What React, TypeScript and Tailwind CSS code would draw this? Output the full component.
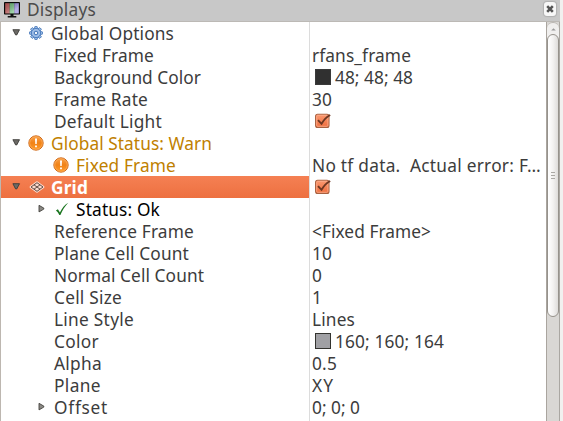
import { useLayoutEffect, useRef } from "react";
import type { ReactNode } from "react";

// Text tracked so that its line takes the given advance width.
function Label({ text, width, className = "" }: { text: string; width: number; className?: string }) {
  const ref = useRef<HTMLSpanElement>(null);
  useLayoutEffect(() => {
    const el = ref.current;
    if (!el) return;
    el.style.letterSpacing = "0px";
    const natural = el.getBoundingClientRect().width;
    el.style.letterSpacing = `${(width - natural) / text.length}px`;
  }, [text, width]);
  return (
    <span ref={ref} className={`shrink-0 whitespace-pre ${className}`}>
      {text}
    </span>
  );
}

function Down() {
  return (
    <svg width="9" height="8" viewBox="0 0 9 8" className="shrink-0">
      <path d="M0.9 0.7h6.6L4.8 5.9H3.6z" fill="#6b6965" stroke="#3d3c39" strokeWidth="0.9" />
    </svg>
  );
}

function Right() {
  return (
    <svg width="7" height="8" viewBox="0 0 7 8" className="shrink-0">
      <path d="M1 0.3v6.6L5.8 4.1v-1z" fill="#8b8985" stroke="#454440" strokeWidth="0.9" />
    </svg>
  );
}

function Gear() {
  const teeth = [0, 45, 90, 135, 180, 225, 270, 315];
  return (
    <svg width="14" height="14" viewBox="0 0 14 14" className="shrink-0">
      {teeth.map((a) => (
        <rect key={a} x="5.7" y="0.5" width="2.6" height="3" rx="0.6" fill="#a4c2e8" stroke="#3f73b7" strokeWidth="0.9" transform={`rotate(${a} 7 7)`} />
      ))}
      <circle cx="7" cy="7" r="4.6" fill="#9dbde6" stroke="#4679bd" strokeWidth="0.9" />
      <circle cx="7" cy="7" r="1.8" fill="#f1f6fc" stroke="#3f73b7" strokeWidth="1" />
    </svg>
  );
}

function Warning() {
  return (
    <svg width="16" height="16" viewBox="0 0 16 16" className="shrink-0">
      <defs>
        <linearGradient id="warn" x1="0" y1="0" x2="0" y2="1">
          <stop offset="0" stopColor="#f7a04a" />
          <stop offset="0.5" stopColor="#f18216" />
          <stop offset="1" stopColor="#ff9d29" />
        </linearGradient>
      </defs>
      <circle cx="8" cy="8" r="7.2" fill="url(#warn)" stroke="#c9600d" strokeWidth="0.9" />
      <circle cx="8" cy="8" r="6.3" fill="none" stroke="#ffb565" strokeWidth="0.7" />
      <path d="M7 3.5h2l-.3 5.4H7.3zM7.1 10.5h1.8v1.8H7.1z" fill="#fff" />
    </svg>
  );
}

function GridIcon() {
  return (
    <svg width="16" height="12" viewBox="0 0 16 12" className="shrink-0">
      <path d="M8 1.5 14.2 6 8 10.5 1.8 6z" fill="#f8d9cd" stroke="#fbd9cc" strokeWidth="2.4" strokeLinejoin="round" />
      <path d="M8 1.7 14 6 8 10.3 2 6zM5 3.85 11 8.15M11 3.85 5 8.15" fill="none" stroke="#624a42" strokeWidth="1" />
    </svg>
  );
}

function Tick() {
  return (
    <svg width="15" height="14" viewBox="0 0 15 14" className="shrink-0">
      <path d="M0.9 8.4 2.9 7.3 4.9 10.5C7 6.1 9.5 3 13.2 0.8 10 4.2 7.5 8.2 5.4 12.9H4.3C3.5 11.2 2.5 9.6 0.9 8.4z" fill="#19751e" />
    </svg>
  );
}

function Checkbox() {
  return (
    <svg width="17" height="16" viewBox="0 0 17 16" className="ml-[5px] shrink-0">
      <defs>
        <linearGradient id="box" x1="0" y1="0" x2="0" y2="1">
          <stop offset="0" stopColor="#fb9a72" />
          <stop offset="1" stopColor="#ee6d3d" />
        </linearGradient>
      </defs>
      <rect x="0.6" y="1.2" width="13.4" height="13.2" rx="2" fill="url(#box)" stroke="#a8603f" strokeWidth="1.1" />
      <rect x="1.7" y="2.3" width="11.2" height="11" rx="1" fill="none" stroke="#fcae8e" strokeWidth="0.8" />
      <path d="M3 7.2 6.5 10.8C8.8 6.9 11.6 3.8 15.2 2" fill="none" stroke="#6d3722" strokeWidth="1.9" />
    </svg>
  );
}

function Monitor() {
  return (
    <svg width="16" height="16" viewBox="0 0 16 16" className="mt-[2px] shrink-0">
      <defs>
        <linearGradient id="shine" x1="0" y1="0" x2="1" y2="1">
          <stop offset="0" stopColor="#000" stopOpacity="0.15" />
          <stop offset="0.7" stopColor="#fff" stopOpacity="0.35" />
        </linearGradient>
      </defs>
      <path d="M6.5 12h3v2h2.8v1.5H3.7V14h2.8z" fill="#111" />
      <rect width="16" height="12.6" rx="0.8" fill="#080808" />
      <path d="M1.2 1.2h4.5v10.2H1.2z" fill="#c35b5b" />
      <path d="M5.7 1.2h4.6v10.2H5.7z" fill="#6dbb7b" />
      <path d="M10.3 1.2h4.5v10.2h-4.5z" fill="#8b80d8" />
      <path d="M1.2 1.2h13.6v10.2H1.2z" fill="url(#shine)" />
    </svg>
  );
}

function Swatch({ className }: { className: string }) {
  return <span className={`mr-[4px] ml-[5px] size-4 shrink-0 border ${className}`} />;
}

type RowData = {
  name: string;
  w: number;
  pad: string;
  lead?: ReactNode;
  tone?: string;
  selected?: boolean;
  value?: string;
  vw?: number;
  mark?: ReactNode;
};

const top = "pl-[11px]";
const leaf = "pl-[53px]";

const rows: RowData[] = [
  { name: "Global Options", w: 123, pad: top, lead: <><Down /><span className="w-[8px]" /><Gear /><span className="w-[8px]" /></> },
  { name: "Fixed Frame", w: 100, pad: leaf, value: "rfans_frame", vw: 99 },
  { name: "Background Color", w: 147, pad: leaf, value: "48; 48; 48", vw: 78, mark: <Swatch className="border-[#3a3a3a] bg-[#303030]" /> },
  { name: "Frame Rate", w: 94, pad: leaf, value: "30", vw: 20 },
  { name: "Default Light", w: 108, pad: leaf, mark: <Checkbox /> },
  { name: "Global Status: Warn", w: 161, pad: top, tone: "text-[#c08000]", lead: <><Down /><span className="w-[7px]" /><Warning /><span className="w-[7px]" /></> },
  { name: "Fixed Frame", w: 100, pad: "pl-[52px]", tone: "text-[#c08000]", lead: <><Warning /><span className="w-[7px]" /></>, value: "No tf data.  Actual error: F…", vw: 229 },
  { name: "Grid", w: 37, pad: top, tone: "font-bold text-white", selected: true, lead: <><Down /><span className="w-[8px]" /><GridIcon /><span className="w-[6px]" /></>, mark: <Checkbox /> },
  { name: "Status: Ok", w: 84, pad: "pl-[37px]", tone: "text-black", lead: <><Right /><span className="w-[10px]" /><Tick /><span className="w-[6px]" /></> },
  { name: "Reference Frame", w: 140, pad: leaf, value: "<Fixed Frame>", vw: 119 },
  { name: "Plane Cell Count", w: 135, pad: leaf, value: "10", vw: 20 },
  { name: "Normal Cell Count", w: 150, pad: leaf, value: "0", vw: 10 },
  { name: "Cell Size", w: 68, pad: leaf, value: "1", vw: 10 },
  { name: "Line Style", w: 80, pad: leaf, value: "Lines", vw: 43 },
  { name: "Color", w: 45, pad: leaf, value: "160; 160; 164", vw: 109, mark: <Swatch className="border-[#33332f] bg-[#a0a0a4]" /> },
  { name: "Alpha", w: 48, pad: leaf, value: "0.5", vw: 25 },
  { name: "Plane", w: 47, pad: leaf, value: "XY", vw: 22 },
  { name: "Offset", w: 54, pad: "pl-[37px]", lead: <><Right /><span className="w-[9px]" /></>, value: "0; 0; 0", vw: 48 },
];

function Row({ row }: { row: RowData }) {
  return (
    <div className="flex h-[22px] shrink-0">
      <div className={`flex w-[308px] shrink-0 items-center ${row.pad} ${row.selected ? "bg-linear-to-b from-[#f58053] to-[#ed7040]" : ""}`}>
        {row.lead}
        <Label text={row.name} width={row.w} className={`pt-[2px] ${row.tone ?? ""}`} />
      </div>
      <div className="flex min-w-0 flex-1 items-center border-l border-[#dcdcdc]">
        {row.mark}
        {row.value && <Label text={row.value} width={row.vw ?? 0} className={row.mark ? "pt-[2px]" : "ml-[2px] pt-[2px]"} />}
      </div>
    </div>
  );
}

function Scrollbar() {
  return (
    <div className="flex w-[14px] shrink-0 flex-col border-r border-l border-r-[#aaa7a2] border-l-[#aaa59f] bg-[#d9d7d4]">
      <div className="flex h-[18px] shrink-0 items-start justify-center rounded-t-[6px] border-t border-[#b8b5b0] bg-[#f0efee] pt-[5px]">
        <svg width="5" height="3" viewBox="0 0 5 3">
          <path d="M2.5 0.2 4.8 2.5H0.2z" fill="#999" />
        </svg>
      </div>
      <div className="-mt-[6px] flex h-[283px] shrink-0 flex-col items-center justify-center gap-[2px] rounded-[6px] border border-[#96928c] bg-linear-to-r from-white via-[#f3f2f1] to-[#dedcda]">
        <span className="h-px w-[4px] bg-[#aaa8a4]" />
        <span className="h-px w-[4px] bg-[#aaa8a4]" />
        <span className="h-px w-[4px] bg-[#aaa8a4]" />
      </div>
    </div>
  );
}

export default function App() {
  return (
    <div className="flex h-[421px] w-[563px] overflow-hidden bg-[#f1f0ef] font-['Noto_Sans',sans-serif] text-[17.3px] leading-[22px] text-[#3c3c3c]">
      <div className="flex w-[560px] shrink-0 flex-col">
        <header className="flex h-[22px] shrink-0 items-start border-b border-[#bcb9b5] bg-[#c8c8c8] pl-1">
          <Monitor />
          <Label text="Displays" width={69} className="ml-[7px] leading-[20px] text-[#4c4c4c]" />
          <span className="mt-[2px] mr-[4px] ml-auto flex h-[14px] w-[12px] items-center justify-center rounded-[3px] bg-[#f7f7f7] shadow-[0_0_1px_1px_#b0b0b0]">
            <svg width="8" height="8" viewBox="0 0 8 8">
              <path d="M1.2 1.2 6.8 6.8M6.8 1.2 1.2 6.8" stroke="#555" strokeWidth="2.6" />
            </svg>
          </span>
        </header>
        <div className="flex min-h-0 flex-1">
          <main className="flex min-w-0 flex-1 flex-col border-l border-[#bdb7b0] bg-white">
            {rows.map((row, i) => (
              <Row key={i} row={row} />
            ))}
            <div className="flex flex-1">
              <div className="w-[308px]" />
              <div className="flex-1 border-l border-[#dcdcdc]" />
            </div>
          </main>
          <Scrollbar />
        </div>
      </div>
    </div>
  );
}
